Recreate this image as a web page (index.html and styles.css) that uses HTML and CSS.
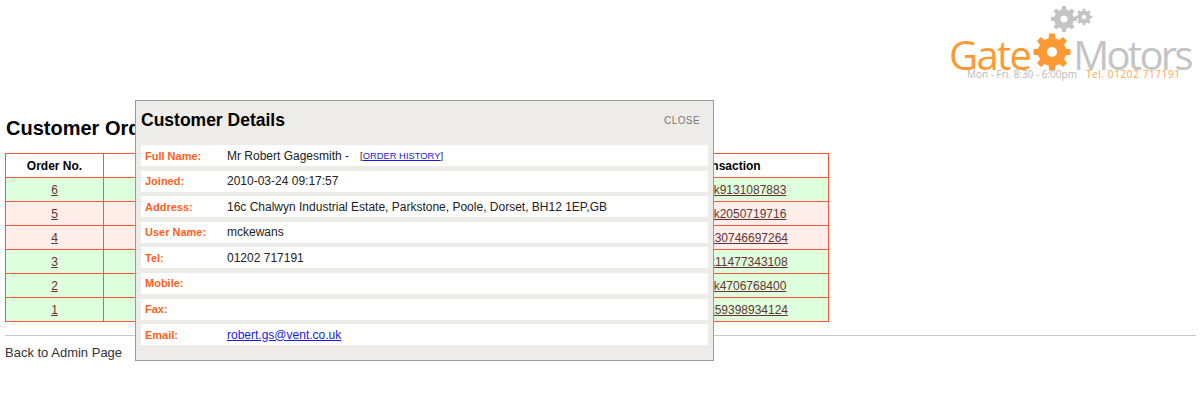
FILE: index.html
```html
<!DOCTYPE html>
<html lang="en">
<head>
    <meta charset="UTF-8">
    <title>Customer Orders</title>
    <link rel="stylesheet" href="styles.css">
</head>
<body>
    <svg class="gear-defs" width="0" height="0">
        <symbol id="gear" viewBox="-20 -20 40 40">
            <circle r="9.5" fill="none" stroke="currentColor" stroke-width="9"/>
            <path id="tooth" d="M-3.6 -12 L-2.8 -18.5 L2.8 -18.5 L3.6 -12 Z" fill="currentColor"/>
            <use href="#tooth" transform="rotate(45)"/>
            <use href="#tooth" transform="rotate(90)"/>
            <use href="#tooth" transform="rotate(135)"/>
            <use href="#tooth" transform="rotate(180)"/>
            <use href="#tooth" transform="rotate(225)"/>
            <use href="#tooth" transform="rotate(270)"/>
            <use href="#tooth" transform="rotate(315)"/>
        </symbol>
    </svg>

    <div class="header">
        <div class="logo">
            <svg class="gear gear-big"><use href="#gear"/></svg>
            <svg class="gear gear-small"><use href="#gear"/></svg>
            <div class="logo-name">
                <span class="logo-gate">Gate</span>
                <svg class="gear gear-main"><use href="#gear"/></svg>
                <span class="logo-motors">Motors</span>
            </div>
            <div class="logo-info">
                <span class="logo-hours">Mon - Fri. 8:30 - 6:00pm</span>
                <span class="logo-tel">Tel. 01202 717191</span>
            </div>
        </div>
    </div>

    <h2>Customer Orders</h2>

    <table class="orders">
        <colgroup>
            <col class="col-order">
            <col>
            <col class="col-trans">
        </colgroup>
        <tr><th>Order No.</th><th></th><th>Transaction</th></tr>
        <tr class="paid"><td><a href="#">6</a></td><td></td><td><a href="#">paypal-ak9131087883</a></td></tr>
        <tr class="unpaid"><td><a href="#">5</a></td><td></td><td><a href="#">paypal-ak2050719716</a></td></tr>
        <tr class="unpaid"><td><a href="#">4</a></td><td></td><td><a href="#">paypal-tx30746697264</a></td></tr>
        <tr class="paid"><td><a href="#">3</a></td><td></td><td><a href="#">paypal-tx11477343108</a></td></tr>
        <tr class="paid"><td><a href="#">2</a></td><td></td><td><a href="#">paypal-ak4706768400</a></td></tr>
        <tr class="paid"><td><a href="#">1</a></td><td></td><td><a href="#">paypal-tx59398934124</a></td></tr>
    </table>

    <hr>
    <div class="back">Back to Admin Page</div>

    <div class="modal">
        <div class="modal-head">
            <h3>Customer Details</h3>
            <span class="close">CLOSE</span>
        </div>
        <div class="details">
            <div class="detail"><span class="label">Full Name:</span><span>Mr Robert Gagesmith -</span><span class="history">[<a href="#">ORDER HISTORY</a>]</span></div>
            <div class="detail"><span class="label">Joined:</span><span>2010-03-24 09:17:57</span></div>
            <div class="detail"><span class="label">Address:</span><span>16c Chalwyn Industrial Estate, Parkstone, Poole, Dorset, BH12 1EP,GB</span></div>
            <div class="detail"><span class="label">User Name:</span><span>mckewans</span></div>
            <div class="detail"><span class="label">Tel:</span><span>01202 717191</span></div>
            <div class="detail"><span class="label">Mobile:</span></div>
            <div class="detail"><span class="label">Fax:</span></div>
            <div class="detail"><span class="label">Email:</span><a href="#">robert.gs@vent.co.uk</a></div>
        </div>
    </div>
</body>
</html>
```

FILE: styles.css
```css
body {
    margin: 0;
    padding: 0 4px 0 5px;
    background: #fff;
    color: #222;
    font-family: "Liberation Sans", Arial, sans-serif;
    font-size: 12px;
}
.gear-defs {
    position: absolute;
}
.header {
    display: flex;
    justify-content: flex-end;
    height: 80px;
}
.logo {
    position: relative;
    width: 245px;
    margin-right: 2px;
    padding-top: 32px;
    box-sizing: border-box;
}
.gear {
    display: block;
    flex-shrink: 0;
}
.gear-main {
    width: 40px;
    height: 40px;
    margin-left: 2px;
    color: #ff9933;
}
.gear-big,
.gear-small {
    position: absolute;
    color: #c4c4c4;
}
.gear-big {
    left: 101px;
    top: 5px;
    width: 28px;
    height: 28px;
}
.gear-small {
    left: 126px;
    top: 8px;
    width: 18px;
    height: 18px;
}
.logo-name {
    display: flex;
    align-items: center;
    height: 40px;
    font-family: "Open Sans", sans-serif;
    font-size: 40px;
    line-height: 40px;
    letter-spacing: -1.7px;
}
.logo-gate {
    margin-top: 5px;
    color: #ff9933;
}
.logo-motors {
    margin: 5px 0 0 1px;
    color: #c4c4c4;
    letter-spacing: -2.7px;
}
.logo-info {
    display: flex;
    margin: -4px 0 0 18px;
    font-family: "Open Sans", sans-serif;
    font-size: 10px;
    line-height: 12px;
}
.logo-hours {
    color: #b8b8b8;
    width: 119px;
}
.logo-tel {
    color: #ffa54d;
    letter-spacing: 0.6px;
}
h2 {
    margin: 36px 0 13px 1px;
    color: #000;
    font-size: 20px;
    line-height: 24px;
}
.orders {
    width: 824px;
    table-layout: fixed;
    border-collapse: collapse;
}
.col-order {
    width: 98px;
}
.col-trans {
    width: 203px;
}
.orders th,
.orders td {
    height: 23px;
    padding: 0;
    border: 1px solid #ff5533;
    text-align: center;
}
.orders th {
    color: #000;
}
.paid {
    background: #ddffdd;
}
.unpaid {
    background: #ffeeea;
}
.orders a {
    color: #663333;
}
hr {
    margin: 13px 0 0;
    border: none;
    border-top: 1px solid #c8c8c8;
    height: 1px;
}
.back {
    margin-top: 9px;
    color: #333;
    font-size: 13px;
    line-height: 14px;
}
.modal {
    position: absolute;
    left: 135px;
    top: 100px;
    box-sizing: border-box;
    width: 579px;
    height: 261px;
    padding: 0 5px;
    background: #eeece8;
    border: 1px solid #999;
}
.modal-head {
    display: flex;
    justify-content: space-between;
    align-items: center;
    height: 38px;
    margin-bottom: 6px;
}
h3 {
    margin: 0;
    color: #000;
    font-size: 17.5px;
}
.close {
    margin-right: 8px;
    color: #777;
    font-size: 10px;
    letter-spacing: 0.4px;
}
.details {
    display: flex;
    flex-direction: column;
    gap: 4.6px;
}
.detail {
    display: flex;
    align-items: center;
    height: 21px;
    padding-left: 4px;
    background: #fff;
    color: #222;
}
.label {
    width: 82px;
    color: #ff5f22;
    font-size: 11px;
    font-weight: bold;
}
.detail a {
    color: #1a1ae0;
}
.history {
    margin-left: 11px;
    font-size: 9.4px;
}
```
